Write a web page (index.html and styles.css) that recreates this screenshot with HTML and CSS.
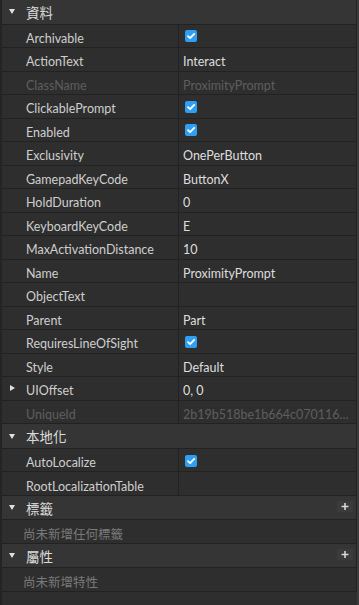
FILE: index.html
```html
<!DOCTYPE html>
<html>
<head>
<meta charset="utf-8">
<link rel="stylesheet" href="styles.css">
</head>
<body>
<div class="panel">
  <div class="section"><span class="arrow down"></span><span class="sec-title">資料</span></div>
  <div class="row"><div class="name">Archivable</div><div class="val"><span class="cb"><svg viewBox="0 0 12 12" width="12" height="12"><path d="M3 6.2 L5.1 8.2 L9.2 3.9" fill="none" stroke="#fff" stroke-width="1.8" stroke-linecap="round" stroke-linejoin="round"/></svg></span></div></div>
  <div class="row"><div class="name">ActionText</div><div class="val">Interact</div></div>
  <div class="row dis"><div class="name">ClassName</div><div class="val">ProximityPrompt</div></div>
  <div class="row"><div class="name">ClickablePrompt</div><div class="val"><span class="cb"><svg viewBox="0 0 12 12" width="12" height="12"><path d="M3 6.2 L5.1 8.2 L9.2 3.9" fill="none" stroke="#fff" stroke-width="1.8" stroke-linecap="round" stroke-linejoin="round"/></svg></span></div></div>
  <div class="row"><div class="name">Enabled</div><div class="val"><span class="cb"><svg viewBox="0 0 12 12" width="12" height="12"><path d="M3 6.2 L5.1 8.2 L9.2 3.9" fill="none" stroke="#fff" stroke-width="1.8" stroke-linecap="round" stroke-linejoin="round"/></svg></span></div></div>
  <div class="row"><div class="name">Exclusivity</div><div class="val">OnePerButton</div></div>
  <div class="row"><div class="name">GamepadKeyCode</div><div class="val">ButtonX</div></div>
  <div class="row"><div class="name">HoldDuration</div><div class="val">0</div></div>
  <div class="row"><div class="name">KeyboardKeyCode</div><div class="val">E</div></div>
  <div class="row"><div class="name">MaxActivationDistance</div><div class="val">10</div></div>
  <div class="row"><div class="name">Name</div><div class="val">ProximityPrompt</div></div>
  <div class="row"><div class="name">ObjectText</div><div class="val"></div></div>
  <div class="row"><div class="name">Parent</div><div class="val">Part</div></div>
  <div class="row"><div class="name">RequiresLineOfSight</div><div class="val"><span class="cb"><svg viewBox="0 0 12 12" width="12" height="12"><path d="M3 6.2 L5.1 8.2 L9.2 3.9" fill="none" stroke="#fff" stroke-width="1.8" stroke-linecap="round" stroke-linejoin="round"/></svg></span></div></div>
  <div class="row"><div class="name">Style</div><div class="val">Default</div></div>
  <div class="row"><div class="name"><span class="arrow right"></span>UIOffset</div><div class="val">0, 0</div></div>
  <div class="row dis"><div class="name">UniqueId</div><div class="val">2b19b518be1b664c070116...</div></div>
  <div class="section"><span class="arrow down"></span><span class="sec-title">本地化</span></div>
  <div class="row"><div class="name">AutoLocalize</div><div class="val"><span class="cb"><svg viewBox="0 0 12 12" width="12" height="12"><path d="M3 6.2 L5.1 8.2 L9.2 3.9" fill="none" stroke="#fff" stroke-width="1.8" stroke-linecap="round" stroke-linejoin="round"/></svg></span></div></div>
  <div class="row"><div class="name">RootLocalizationTable</div><div class="val"></div></div>
  <div class="section"><span class="arrow down"></span><span class="sec-title">標籤</span><span class="plus"><svg viewBox="0 0 16 11" width="16" height="11"><path d="M8 2 V9 M4.5 5.5 H11.5" stroke="#d8d8d8" stroke-width="1.6"/></svg></span></div>
  <div class="empty">尚未新增任何標籤</div>
  <div class="section"><span class="arrow down"></span><span class="sec-title">屬性</span><span class="plus"><svg viewBox="0 0 16 11" width="16" height="11"><path d="M8 2 V9 M4.5 5.5 H11.5" stroke="#d8d8d8" stroke-width="1.6"/></svg></span></div>
  <div class="empty">尚未新增特性</div>
</div>
</body>
</html>
```
FILE: styles.css
```css
html, body {
  margin: 0;
  padding: 0;
  background: #2e2e2e;
}
body {
  width: 359px;
  height: 605px;
  overflow: hidden;
  font-family: Lato, "Noto Sans CJK TC", sans-serif;
  font-size: 12.5px;
}
.panel {
  box-sizing: border-box;
  width: 359px;
  height: 605px;
  border-left: 2px solid #242424;
  border-right: 2px solid #3c3c3c;
  display: flex;
  flex-direction: column;
}
.panel > div {
  border-right: 1px solid #222222;
}
.section {
  box-sizing: border-box;
  height: 24.5px;
  flex: none;
  display: flex;
  align-items: center;
  position: relative;
  background: #353535;
  border-bottom: 1px solid #222222;
  color: #dcdcdc;
  font-family: "Noto Sans CJK TC", sans-serif;
  font-size: 13.5px;
}
.sec-title {
  margin-left: 11px;
}
.arrow {
  display: inline-block;
  width: 0;
  height: 0;
}
.arrow.down {
  margin-left: 7px;
  border-left: 3.5px solid transparent;
  border-right: 3.5px solid transparent;
  border-top: 5px solid #e0e0e0;
}
.arrow.right {
  position: absolute;
  left: 8px;
  top: 50%;
  margin-top: -3px;
  border-top: 3.5px solid transparent;
  border-bottom: 3.5px solid transparent;
  border-left: 5px solid #e0e0e0;
}
.plus {
  position: absolute;
  right: 3px;
  top: 5px;
  width: 16px;
  height: 11px;
  background: #3b3b3b;
  display: flex;
}
.row {
  box-sizing: border-box;
  height: 23.53px;
  flex: none;
  display: flex;
  border-bottom: 1px solid #222222;
  color: #cfcfcf;
}
.name {
  box-sizing: border-box;
  width: 177px;
  flex: none;
  position: relative;
  padding-left: 24px;
  padding-top: 5px;
  border-right: 1px solid #222222;
  display: flex;
  align-items: center;
  white-space: nowrap;
  overflow: hidden;
}
.val {
  box-sizing: border-box;
  flex: 1;
  min-width: 0;
  padding-left: 4px;
  padding-top: 5px;
  display: flex;
  align-items: center;
  white-space: nowrap;
  overflow: hidden;
  color: #dedede;
}
.row.dis .name, .row.dis .val {
  color: #5e5e5e;
}
.cb {
  display: flex;
  width: 12px;
  height: 12px;
  margin-left: 2px;
  margin-top: -4px;
  border-radius: 2px;
  background: #2f9ff3;
}
.empty {
  box-sizing: border-box;
  height: 23.5px;
  flex: none;
  display: flex;
  align-items: center;
  padding-left: 21px;
  padding-top: 4px;
  border-bottom: 1px solid #222222;
  color: #7a7a7a;
  font-family: "Noto Sans CJK TC", sans-serif;
  font-size: 12.5px;
}
```
